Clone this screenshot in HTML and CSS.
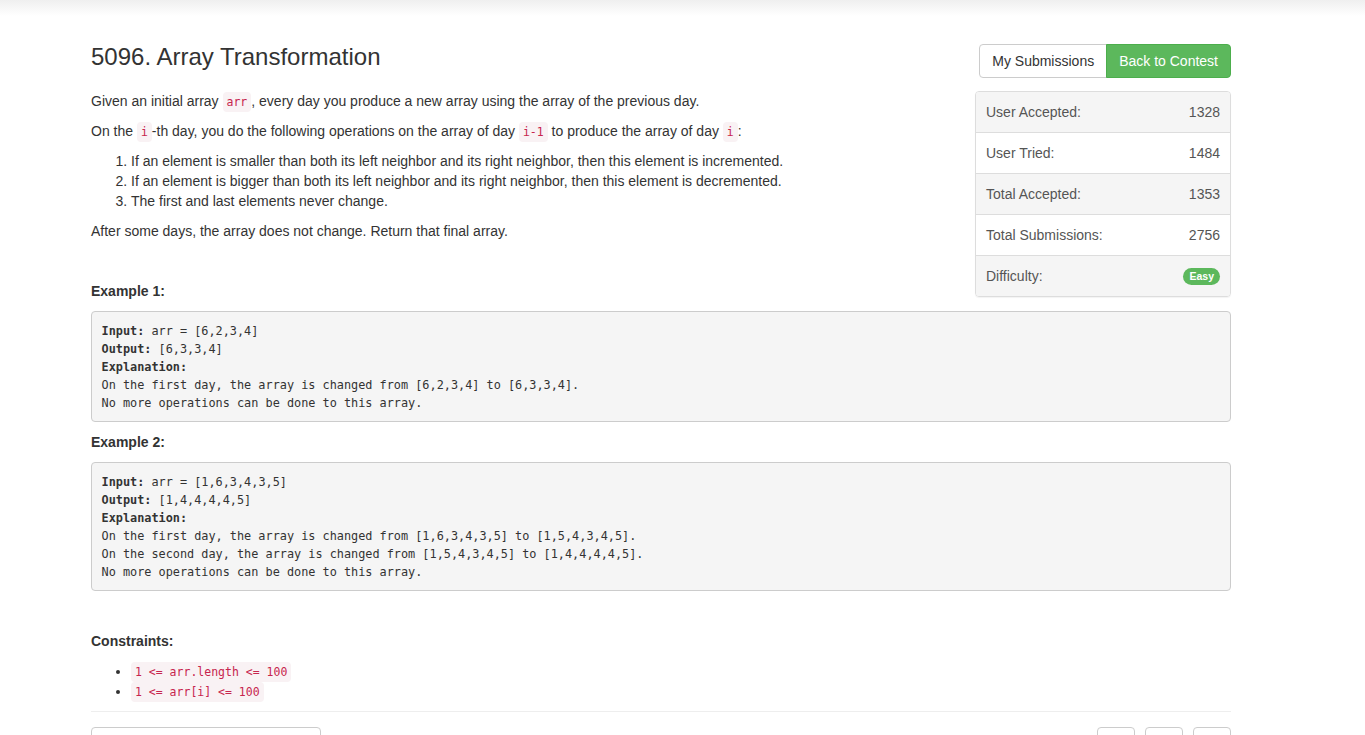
FILE: index.html
```html
<!DOCTYPE html>
<html>
<head>
<meta charset="utf-8">
<link rel="stylesheet" href="styles.css">
</head>
<body>
<div class="topshade"></div>
<div class="container">
  <aside class="side">
    <div class="btn-group">
      <a class="btn btn-default">My Submissions</a>
      <a class="btn btn-success">Back to Contest</a>
    </div>
    <ul class="stats">
      <li class="row"><span>User Accepted:</span><span>1328</span></li>
      <li class="row"><span>User Tried:</span><span>1484</span></li>
      <li class="row"><span>Total Accepted:</span><span>1353</span></li>
      <li class="row"><span>Total Submissions:</span><span>2756</span></li>
      <li class="row"><span>Difficulty:</span><span class="badge">Easy</span></li>
    </ul>
  </aside>
  <h3 class="title">5096. Array Transformation</h3>
  <div class="question">
    <p>Given an initial array <code>arr</code>, every day you produce a new array using the array of the previous day.</p>
    <p>On the <code>i</code>-th day, you do the following operations on the array of day <code>i-1</code> to produce the array of day <code>i</code>:</p>
    <ol>
      <li>If an element is smaller than both its left neighbor and its right neighbor, then this element is incremented.</li>
      <li>If an element is bigger than both its left neighbor and its right neighbor, then this element is decremented.</li>
      <li>The first and last elements never change.</li>
    </ol>
    <p>After some days, the array does not change. Return that final array.</p>
    <p>&nbsp;</p>
    <p><strong>Example 1:</strong></p>
<pre><strong>Input:</strong> arr = [6,2,3,4]
<strong>Output:</strong> [6,3,3,4]
<strong>Explanation:</strong>
On the first day, the array is changed from [6,2,3,4] to [6,3,3,4].
No more operations can be done to this array.
</pre>
    <p><strong>Example 2:</strong></p>
<pre><strong>Input:</strong> arr = [1,6,3,4,3,5]
<strong>Output:</strong> [1,4,4,4,4,5]
<strong>Explanation:</strong>
On the first day, the array is changed from [1,6,3,4,3,5] to [1,5,4,3,4,5].
On the second day, the array is changed from [1,5,4,3,4,5] to [1,4,4,4,4,5].
No more operations can be done to this array.
</pre>
    <p>&nbsp;</p>
    <p><strong>Constraints:</strong></p>
    <ul class="bullets">
      <li><code>1 &lt;= arr.length &lt;= 100</code></li>
      <li><code>1 &lt;= arr[i] &lt;= 100</code></li>
    </ul>
  </div>
  <hr class="divider">
  <div class="bottom">
    <div class="select"></div>
    <div class="tools">
      <span class="tool"></span>
      <span class="tool"></span>
      <span class="tool"></span>
    </div>
  </div>
</div>
</body>
</html>
```

FILE: styles.css
```css
html, body {
  margin: 0;
  padding: 0;
  background: #fff;
}
body {
  font-family: "Liberation Sans", Arial, sans-serif;
  font-size: 14px;
  line-height: 20px;
  color: #333;
}
.topshade {
  height: 16px;
  background: linear-gradient(#efefef, #ffffff);
}
.container {
  width: 1140px;
  margin-left: 91px;
  padding-top: 28px;
}
.side {
  float: right;
  width: 256px;
}
.btn-group {
  display: flex;
  justify-content: flex-end;
}
.btn {
  display: inline-block;
  padding: 6px 12px 6px;
  font-size: 14px;
  line-height: 20px;
  border: 1px solid #ccc;
  cursor: pointer;
}
.btn-default {
  background: #fff;
  color: #333;
  border-radius: 4px 0 0 4px;
}
.btn-success {
  background: #5cb85c;
  border-color: #4cae4c;
  color: #fff;
  border-radius: 0 4px 4px 0;
  margin-left: -1px;
}
.stats {
  list-style: none;
  margin: 13px 0 0;
  padding: 0;
  border: 1px solid #ddd;
  border-radius: 4px;
  overflow: hidden;
  color: #555;
  box-shadow: 0 1px 1px rgba(0,0,0,0.05);
}
.stats .row {
  display: flex;
  justify-content: space-between;
  align-items: center;
  padding: 10px 10px 10px;
  height: 20px;
  background: #fff;
  border-top: 1px solid #ddd;
}
.stats .row:first-child {
  border-top: 0;
}
.stats .row:nth-child(odd) {
  background: #f5f5f5;
}
.badge {
  display: inline-block;
  background: #5cb85c;
  color: #fff;
  font-weight: bold;
  font-size: 10.5px;
  line-height: 13px;
  padding: 2px 6px 2px;
  border-radius: 9px;
}
.title {
  margin: 0 0 21px;
  font-size: 24px;
  font-weight: normal;
  line-height: 26px;
  color: #333;
}
.question p {
  margin: 0 0 10px;
}
.question ol, .question ul {
  margin: 0 0 10px;
  padding-left: 40px;
}
code {
  font-family: "DejaVu Sans Mono", "Liberation Mono", monospace;
  font-size: 11.5px;
  line-height: 1;
  color: #c7254e;
  background: #f9f2f4;
  padding: 3px 4px;
  border-radius: 4px;
}
pre {
  margin: 0 0 10px;
  padding: 9.5px;
  font-family: "DejaVu Sans Mono", "Liberation Mono", monospace;
  font-size: 11.85px;
  line-height: 18px;
  color: #333;
  background: #f5f5f5;
  border: 1px solid #ccc;
  border-radius: 4px;
  white-space: pre;
  overflow: hidden;
}
pre strong {
  font-weight: bold;
}
.divider {
  margin: 0 0 15px;
  border: 0;
  border-top: 1px solid #eee;
  clear: both;
}
.bottom {
  display: flex;
  justify-content: space-between;
}
.select {
  width: 228px;
  height: 32px;
  border: 1px solid #ccc;
  border-radius: 4px;
}
.tools {
  display: flex;
  gap: 10px;
}
.tool {
  width: 36px;
  height: 32px;
  border: 1px solid #ccc;
  border-radius: 4px;
}
```
